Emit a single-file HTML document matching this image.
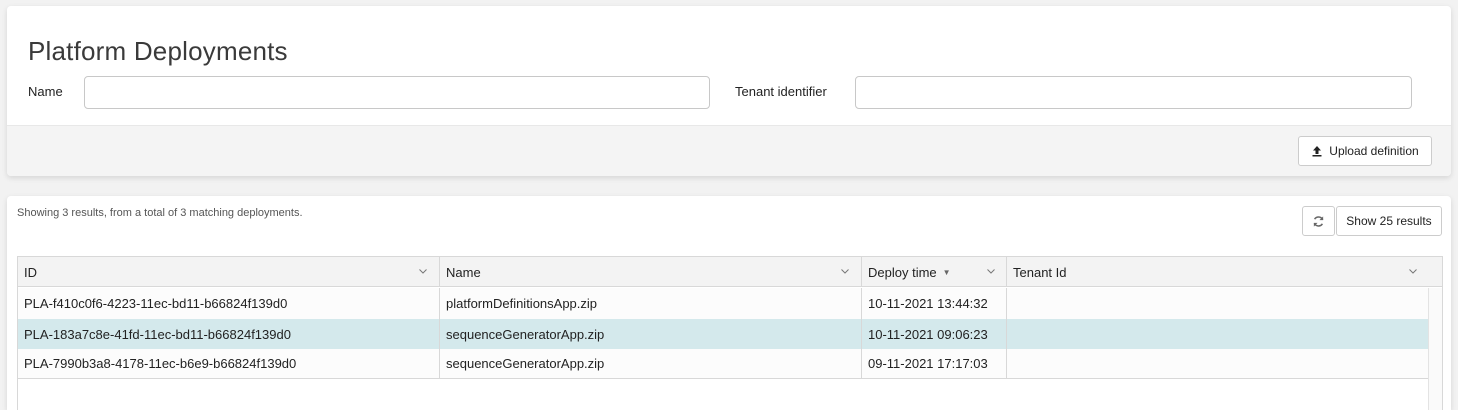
<!DOCTYPE html>
<html style="height:410px;overflow:hidden"><head><style>
*{box-sizing:border-box;margin:0;padding:0}
body{width:1458px;height:410px;background:#f2f2f2;font-family:"Liberation Sans",sans-serif;color:#222;position:relative;overflow:hidden}
.card{position:absolute;left:7px;width:1444px;background:#fff;border-radius:4px;box-shadow:0 2px 6px rgba(0,0,0,.12)}
.abs{position:absolute}
.inp{position:absolute;height:33px;border:1px solid #c8c8c8;border-radius:4px;background:#fff}
.btn{position:absolute;border:1px solid #ccc;border-radius:3px;background:#fff;font-size:12px;display:flex;align-items:center;justify-content:center;color:#222}
.th,.td{position:absolute;font-size:13px;display:flex;align-items:center;padding-left:6px;border-right:1px solid #d8d8d8}
.chev{position:absolute;width:8px;height:5px}
</style></head><body>
<div class="card" style="top:6px;height:170px;overflow:hidden">
  <div class="abs" style="left:0;top:119px;width:1444px;height:51px;background:#f4f4f4;border-top:1px solid #e8e8e8"></div>
  <div class="abs" style="left:21px;top:30px;font-size:26px;color:#3a3a3a;letter-spacing:0.2px">Platform Deployments</div>
  <div class="abs" style="left:21px;top:78px;font-size:13px">Name</div>
  <div class="inp" style="left:77px;top:70px;width:626px"></div>
  <div class="abs" style="left:728px;top:78px;font-size:13px">Tenant identifier</div>
  <div class="inp" style="left:848px;top:70px;width:557px"></div>
  <div class="btn" style="left:1291px;top:130px;width:134px;height:30px"><svg width="12" height="12" viewBox="0 0 12 12" style="margin-right:6px"><path d="M6 1L2 5.5h2.5V9h3V5.5H10z M1.5 10h9v1.5h-9z" fill="#222"/></svg>Upload definition</div>
</div>
<div class="card" style="top:196px;height:214px;border-radius:4px 4px 0 0;overflow:hidden">
  <div class="abs" style="left:10px;top:11px;font-size:11px;color:#555">Showing 3 results, from a total of 3 matching deployments.</div>
  <div class="btn" style="left:1295px;top:10px;width:33px;height:30px"><svg width="13" height="13" viewBox="0 0 14 14"><path d="M11.5 5A5 5 0 0 0 2.8 4.5M2.5 9a5 5 0 0 0 8.7.5" stroke="#666" stroke-width="1.6" fill="none"/><path d="M12 1.5v4H8z M2 12.5v-4h4z" fill="#666"/></svg></div>
  <div class="btn" style="left:1329px;top:10px;width:106px;height:30px">Show 25 results</div>
  <div class="abs" style="left:10px;top:60px;width:1426px;height:160px;border:1px solid #d8d8d8;border-bottom:none"></div>
  <div class="abs" style="left:11px;top:61px;width:1424px;height:30px;background:#f3f3f3;border-bottom:1px solid #d8d8d8"></div>
  <div class="th" style="left:11px;top:61px;width:422px;height:30px">ID</div>
  <div class="th" style="left:433px;top:61px;width:422px;height:30px">Name</div>
  <div class="th" style="left:855px;top:61px;width:145px;height:30px">Deploy time <span style="font-size:8px;color:#666;margin-left:6px">&#9660;</span></div>
  <div class="th" style="left:1000px;top:61px;width:435px;height:30px;border-right:none">Tenant Id</div>
  <svg class="chev" style="left:412px;top:73px" viewBox="0 0 8 5"><path d="M.5.5L4 4 7.5.5" stroke="#777" fill="none"/></svg>
  <svg class="chev" style="left:834px;top:73px" viewBox="0 0 8 5"><path d="M.5.5L4 4 7.5.5" stroke="#777" fill="none"/></svg>
  <svg class="chev" style="left:980px;top:73px" viewBox="0 0 8 5"><path d="M.5.5L4 4 7.5.5" stroke="#777" fill="none"/></svg>
  <svg class="chev" style="left:1402px;top:73px" viewBox="0 0 8 5"><path d="M.5.5L4 4 7.5.5" stroke="#777" fill="none"/></svg>
  <div class="abs" style="left:1421px;top:92px;width:14px;height:130px;border-left:1px solid #e3e3e3;background:#fafafa"></div>
  <div class="abs" style="left:11px;top:123px;width:1410px;height:30px;background:#d4e9ec"></div>
  <div class="abs" style="left:11px;top:182px;width:1410px;height:1px;background:#d8d8d8"></div>
  <div class="abs" style="left:11px;top:92px;width:1410px;height:31px;background:#fcfcfc"></div>
  <div class="abs" style="left:11px;top:153px;width:1410px;height:29px;background:#fcfcfc"></div>
  <div class="td" style="left:11px;top:92px;width:422px;height:31px">PLA-f410c0f6-4223-11ec-bd11-b66824f139d0</div>
  <div class="td" style="left:433px;top:92px;width:422px;height:31px">platformDefinitionsApp.zip</div>
  <div class="td" style="left:855px;top:92px;width:145px;height:31px">10-11-2021 13:44:32</div>
  <div class="td" style="left:11px;top:123px;width:422px;height:30px">PLA-183a7c8e-41fd-11ec-bd11-b66824f139d0</div>
  <div class="td" style="left:433px;top:123px;width:422px;height:30px">sequenceGeneratorApp.zip</div>
  <div class="td" style="left:855px;top:123px;width:145px;height:30px">10-11-2021 09:06:23</div>
  <div class="td" style="left:11px;top:153px;width:422px;height:29px">PLA-7990b3a8-4178-11ec-b6e9-b66824f139d0</div>
  <div class="td" style="left:433px;top:153px;width:422px;height:29px">sequenceGeneratorApp.zip</div>
  <div class="td" style="left:855px;top:153px;width:145px;height:29px">09-11-2021 17:17:03</div>
</div>
</body></html>
